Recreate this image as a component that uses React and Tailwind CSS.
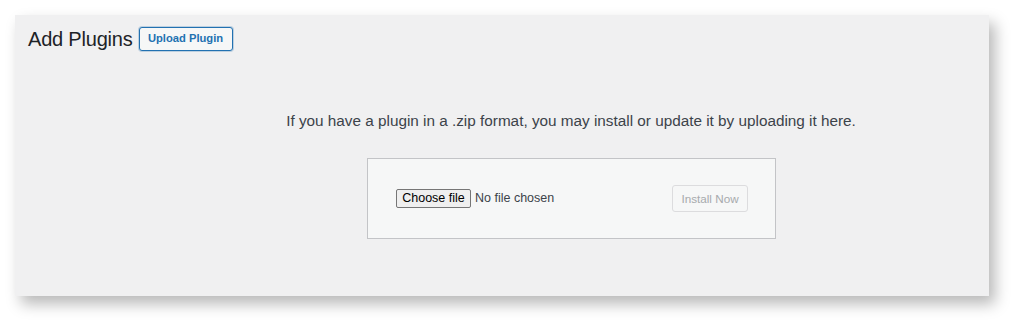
export default function App() {
  return (
    <div className="w-[1014px] h-[321px] bg-white pt-[15px] pl-[15px]" style={{ fontFamily: '"Liberation Sans", Arial, sans-serif' }}>
      <div className="w-[974px] h-[281px] bg-[#f0f0f1] shadow-[6px_8px_14px_rgba(0,0,0,0.28)] flex flex-col">
        <div className="flex items-center pl-[13px] pt-[12px] h-[36px]">
          <h1 className="text-[20px] leading-none text-[#1d2327] tracking-[-0.2px]">Add Plugins</h1>
          <button className="ml-[6px] h-[24px] w-[94px] flex items-center justify-center border border-[#2271b1] rounded-[3px] bg-[#f6f7f7] text-[#2271b1] text-[11.2px] font-bold leading-none shadow-[0_0_0_1px_rgba(34,113,177,0.25)]">Upload Plugin</button>
        </div>
        <p className="mt-[60px] text-center pl-[138px] text-[15.3px] text-[#3c434a] leading-[20px]">If you have a plugin in a .zip format, you may install or update it by uploading it here.</p>
        <div className="mt-[27px] ml-[352px] w-[409px] h-[81px] border border-[#c3c4c7] bg-[#f6f7f7] flex items-center pl-[28px] pr-[27px]">
          <div className="flex items-center">
            <span className="h-[19px] w-[75px] flex items-center justify-center border border-[#767676] rounded-[2px] bg-[#efefef] text-[12.5px] text-black leading-none">Choose file</span>
            <span className="ml-[4px] text-[12.5px] text-[#3c434a]">No file chosen</span>
          </div>
          <button className="ml-auto h-[27px] w-[76px] border border-[#dcdcde] rounded-[3px] bg-[#f6f7f7] text-[#a7aaad] text-[11.7px] leading-none">Install Now</button>
        </div>
      </div>
    </div>
  );
}
